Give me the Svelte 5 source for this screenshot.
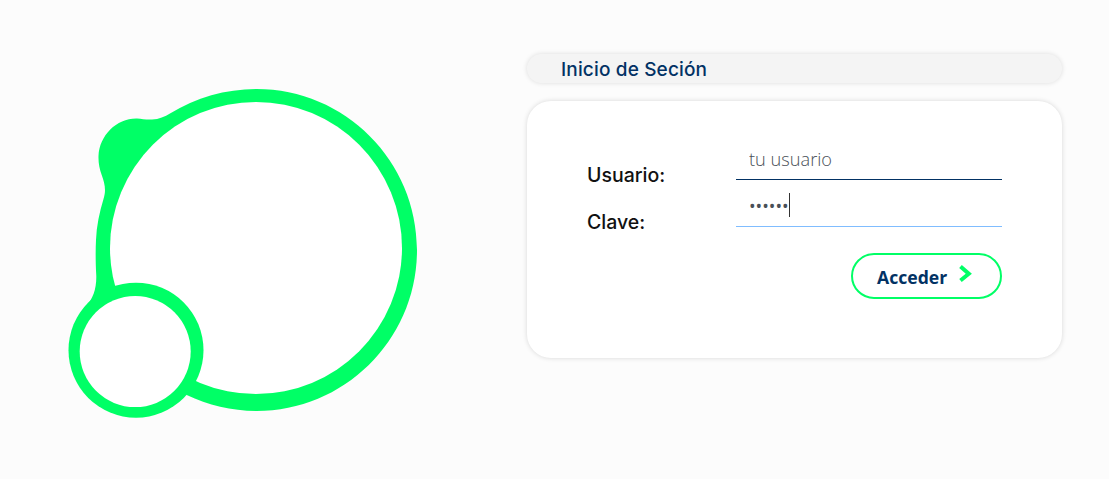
<script lang="ts">
  let usuario = $state('');
  let clave = $state('secret');
</script>

<main class="page">
  <div class="logo-col">
    <svg class="logo" viewBox="0 0 527 479" width="527" height="479" aria-hidden="true">
      <path
        fill="#00ff66"
        d="M170 113.500 C196 97.500 226 89 256.500 89 C345 89 417 161 417 250 C417 339 345 411 256.500 411 C232 411 208 405 186.700 395 L136 350 L85.500 307 C93 299 96.500 289 96.300 276 C95.500 262 95.500 250 96 240 C96.500 226 99.500 212 103.500 199 C106.500 190 104.500 183 101.700 175 C99.500 169 98.300 163 98.500 156 C99.500 135 117 118 137 118.500 C142 118.800 147 120 152 119.500 C159 119.200 165 116.800 170 113.500 Z"
      />
      <circle cx="256" cy="248" r="146" fill="#ffffff" />
      <circle cx="136" cy="350.200" r="67.500" fill="#00ff66" />
      <circle cx="135.200" cy="351.600" r="55.500" fill="#ffffff" />
    </svg>
  </div>

  <section class="login">
    <h1 class="login-title">Inicio de Seción</h1>
    <form class="panel" onsubmit={(e) => e.preventDefault()}>
      <div class="fields">
        <label for="usuario">Usuario:</label>
        <input id="usuario" class="line" bind:value={usuario} placeholder="tu usuario" />
        <label for="clave">Clave:</label>
        <div class="pass-wrap">
          <input id="clave" class="line focused" type="password" bind:value={clave} />
          <span class="caret"></span>
        </div>
      </div>
      <div class="actions">
        <button type="submit" class="go">
          Acceder
          <svg class="chevron" viewBox="0 0 14 18" width="14" height="18" aria-hidden="true">
            <path d="M2.500 1.500 L10.800 8.800 L2.500 15.500" fill="none" stroke="#00ff66" stroke-width="4" />
          </svg>
        </button>
      </div>
    </form>
  </section>
</main>

<style>
  :global(body) {
    background: #fcfcfc;
    overflow: hidden;
  }

  .page {
    width: 1109px;
    height: 479px;
    display: grid;
    grid-template-columns: 527px 535px;
  }

  .logo {
    display: block;
  }

  .login {
    padding-top: 54px;
    display: grid;
    grid-template-rows: 29px 257px;
    gap: 18px;
    align-content: start;
  }

  .login-title {
    margin: 0;
    padding-left: 34px;
    height: 29px;
    line-height: 31px;
    background: #f4f4f4;
    border-radius: 15px;
    box-shadow: 0 0 5px rgba(0, 0, 0, 0.13);
    color: #023264;
    font-family: "Inter", sans-serif;
    font-size: 19px;
    font-weight: 500;
    letter-spacing: 0.15px;
  }

  .panel {
    box-sizing: border-box;
    background: #fff;
    border-radius: 24px;
    box-shadow: 0 0 5px rgba(0, 0, 0, 0.15);
    padding: 34px 60px 0;
  }

  .fields {
    display: grid;
    grid-template-columns: 149px 266px;
    grid-template-rows: 45px 47px;
  }

  label {
    align-self: end;
    color: #111;
    font-family: "Inter", sans-serif;
    font-size: 19.500px;
    font-weight: 500;
    line-height: 24px;
    margin-bottom: -7px;
  }

  .pass-wrap {
    position: relative;
  }

  .line {
    display: block;
    box-sizing: border-box;
    width: 266px;
    height: 45px;
    margin: 0;
    padding: 4px 13px 0;
    border: 0;
    border-bottom: 1px solid #023264;
    outline: 0;
    background: transparent;
    color: #495057;
    font-family: "Open Sans", sans-serif;
    font-size: 18.200px;
    font-weight: 300;
  }

  .line::placeholder {
    color: #495057;
    opacity: 1;
  }

  .line.focused {
    height: 47px;
    padding-top: 6px;
    border-bottom-color: #80bdff;
    font-size: 17.600px;
    font-weight: 400;
  }

  .caret {
    position: absolute;
    left: 53px;
    top: 13px;
    width: 1px;
    height: 24px;
    background: #333;
  }

  .actions {
    display: flex;
    justify-content: flex-end;
    margin-top: 26px;
    width: 415px;
  }

  .go {
    box-sizing: border-box;
    width: 151px;
    height: 46px;
    padding: 2px 0 0 24px;
    display: flex;
    align-items: center;
    gap: 11px;
    background: #fff;
    border: 2px solid #00ff66;
    border-radius: 23px;
    color: #023264;
    font-family: "Open Sans", sans-serif;
    font-size: 17.600px;
    font-weight: 700;
    cursor: pointer;
  }

  .chevron {
    margin-top: -6px;
  }
</style>
